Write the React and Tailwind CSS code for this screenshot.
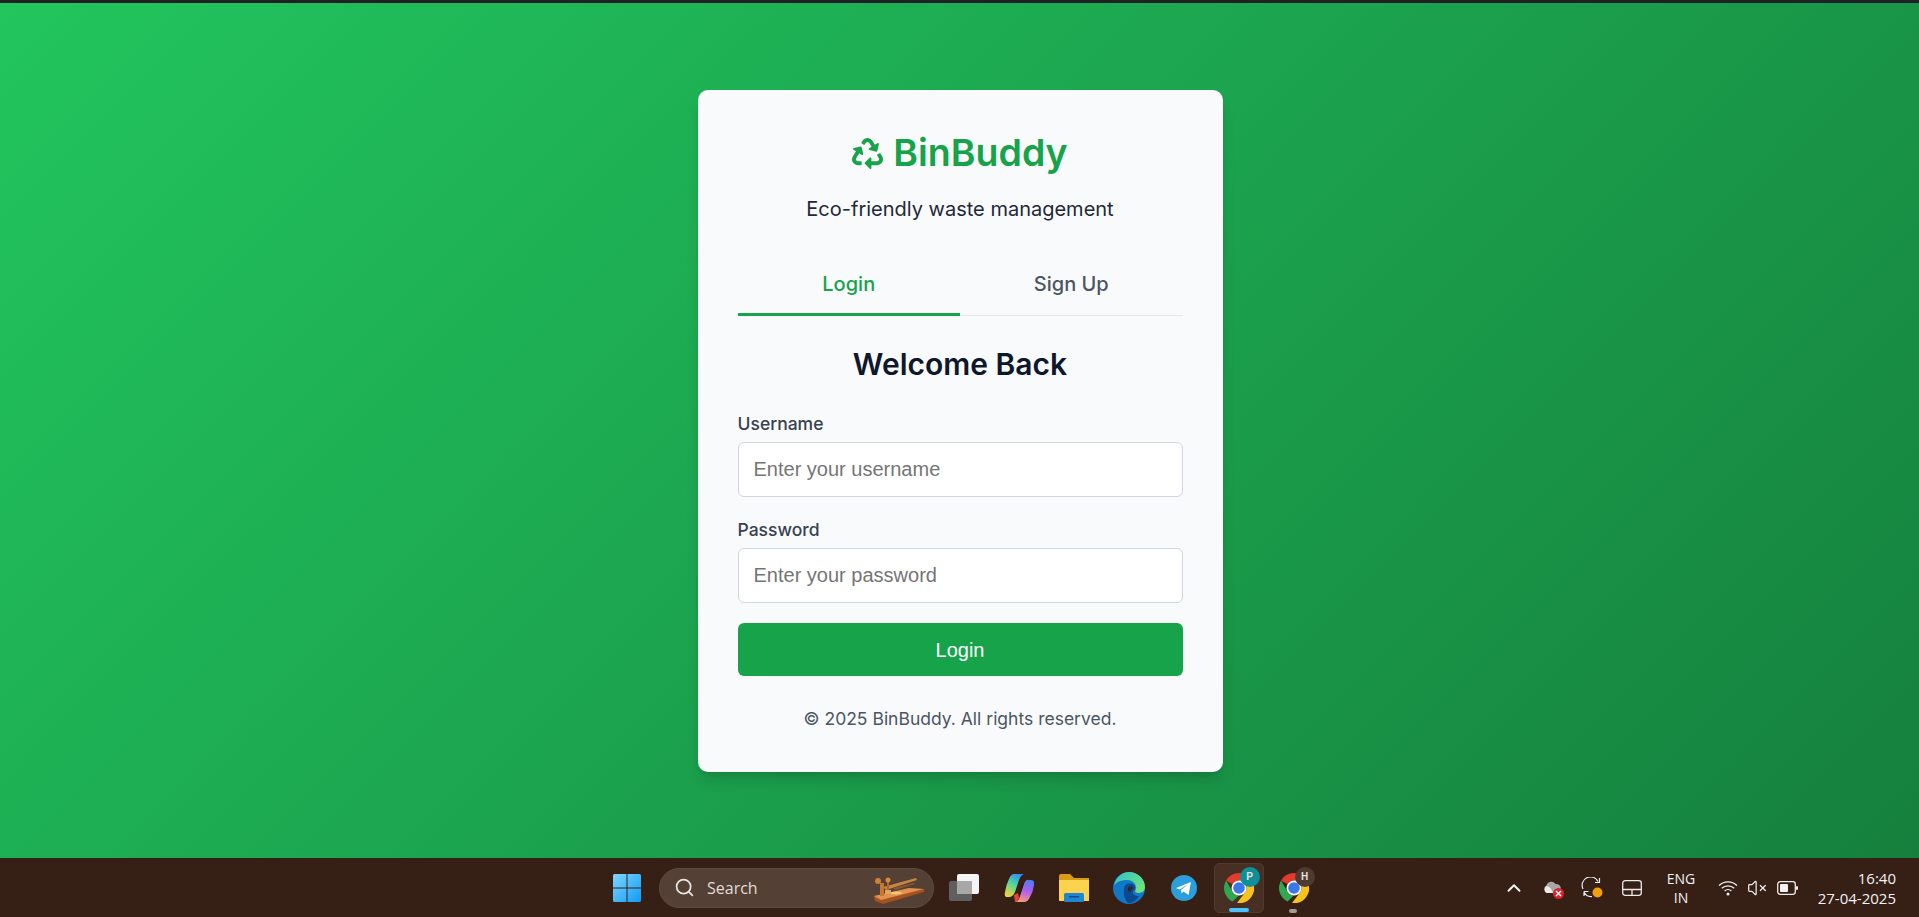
import { FaRecycle } from 'react-icons/fa';
import { ChevronUp, Search, VolumeX } from 'lucide-react';

const inter = "font-['Inter',sans-serif]";

const WindowsLogo = () => (
  <svg width="30" height="30" viewBox="0 0 30 30">
    <defs>
      <linearGradient id="win" x1="0" y1="0" x2="1" y2="1">
        <stop offset="0" stopColor="#7fd6ff" />
        <stop offset="1" stopColor="#0f9bf5" />
      </linearGradient>
    </defs>
    <path d="M1 2.5A1.5 1.5 0 0 1 2.500 1H14.500V14.500H1Z M15.500 1H27.500A1.500 1.500 0 0 1 29 2.500V14.500H15.500Z M1 15.500H14.500V29H2.500A1.500 1.500 0 0 1 1 27.500Z M15.500 15.500H29V27.500A1.500 1.500 0 0 1 27.500 29H15.500Z" fill="url(#win)" />
  </svg>
);

const TelegraphKey = () => (
  <svg width="60" height="38" viewBox="0 0 60 38">
    <path d="M3 27 L53 20 L53 23 L12 35 L4 32 Z" fill="#a4521f" />
    <path d="M3 27 L38 19 L53 20 L10 31 Z" fill="#e2924f" />
    <ellipse cx="25" cy="24" rx="6" ry="1.500" fill="#f2c77a" />
    <path d="M9 14 H13 V27 H9 Z" fill="#c9772f" />
    <circle cx="7" cy="12" r="3" fill="#d27f38" />
    <path d="M12 18 L45 9 L46 11 L15 21 Z" fill="#c88540" />
    <path d="M22 19 L43 14 L44 15 L24 21 Z" fill="#8a5a2c" />
    <rect x="16" y="12" width="2" height="9" fill="#b5652a" />
    <circle cx="17" cy="11" r="2.500" fill="#d38a45" />
    <rect x="14" y="21" width="6" height="4" fill="#e0a560" />
  </svg>
);

const TaskViewIcon = () => (
  <svg width="30" height="30" viewBox="0 0 30 30">
    <rect x="0" y="8" width="23" height="20" rx="2" fill="#5f5f5f" />
    <rect x="8" y="1" width="22" height="20" rx="2" fill="#f4f4f4" />
    <rect x="8" y="8" width="15" height="13" fill="#a8a8a8" />
  </svg>
);

const CopilotIcon = () => (
  <svg width="30" height="30" viewBox="0 0 30 30">
    <defs>
      <linearGradient id="cpa" x1="0.7" y1="0" x2="0.2" y2="1">
        <stop offset="0" stopColor="#2f8df4" />
        <stop offset="0.45" stopColor="#4fd6a0" />
        <stop offset="1" stopColor="#f6d23a" />
      </linearGradient>
      <linearGradient id="cpb" x1="0.6" y1="0" x2="0.4" y2="1">
        <stop offset="0" stopColor="#4f7bf0" />
        <stop offset="0.5" stopColor="#b25cf0" />
        <stop offset="1" stopColor="#f79a7a" />
      </linearGradient>
    </defs>
    <path d="M10 1 H20 Q17 2 15 7 L11 19 Q9 24 5 24 H3 Q0 24 1 19 Q2 12 5 6 Q7 1 10 1 Z" fill="url(#cpa)" />
    <path d="M20 29 H11 Q15 28 16 23 L20 11 Q22 6 25 7 H27 Q31 7 30 12 Q29 19 26 24 Q24 29 20 29 Z" fill="url(#cpb)" />
    <path d="M10 22 L14 20 L15 25 Q14 28 11 29 Z" fill="#e8453c" />
    <path d="M19 10 L15.500 21" stroke="#2d1710" strokeWidth="1.800" />
  </svg>
);

const ExplorerIcon = () => (
  <svg width="30" height="30" viewBox="0 0 30 30">
    <path d="M0 3 Q0 1 2 1 H11 L15 5 H30 V28 H0 Z" fill="#d99a16" />
    <path d="M0 7 H30 V27 Q30 28 29 28 H1 Q0 28 0 27 Z" fill="#fbd34f" />
    <rect x="5" y="20" width="20" height="9" rx="1.500" fill="#1f86d6" />
    <rect x="10" y="23" width="10" height="1.500" fill="#0b4f8a" />
  </svg>
);

const EdgeIcon = () => (
  <svg width="32" height="32" viewBox="0 0 32 32">
    <defs>
      <linearGradient id="edg" x1="0" y1="0" x2="1" y2="0.6">
        <stop offset="0" stopColor="#2bc3d2" />
        <stop offset="1" stopColor="#6fe07a" />
      </linearGradient>
    </defs>
    <circle cx="16" cy="16" r="16" fill="#1077c9" />
    <path d="M1 14 C3 5 9 0 16 0 C25 0 32 7 32 15 C32 21 26 22 22 20 C25 14 21 8 14 8 C8 8 3 10 1 14 Z" fill="url(#edg)" />
    <path d="M11 17 C11 12 17 10 21 13 C23 15 22 18 20 19 C19 22 22 24 26 24 C24 28 19 32 15 31 C12 28 10 22 11 17 Z" fill="#0c4a8e" />
    <path d="M15 17 C15 14 19 14 20 16 C18 17 17 19 18 20 C16 20 15 19 15 17 Z" fill="#3c2114" />
  </svg>
);

const TelegramIcon = () => (
  <svg width="26" height="26" viewBox="0 0 26 26">
    <circle cx="13" cy="13" r="13" fill="#2a9fdc" />
    <path d="M5 13 L20 7 L17.500 20 L12.500 16.500 L10.500 18.500 L10 15 L17 9.500 L8.500 14.500 Z" fill="#fff" />
  </svg>
);

const ChromeIcon = ({ letter, badge }) => (
  <div className="relative w-[30px] h-[30px]">
    <svg width="30" height="30" viewBox="0 0 30 30">
      <path d="M15 0 A15 15 0 0 1 28 7.500 H15 A7.500 7.500 0 0 0 8.500 11.250 L2 7.500 A15 15 0 0 1 15 0 Z" fill="#e33b2e" />
      <path d="M2 7.500 L8.500 18.750 A7.500 7.500 0 0 0 15 22.500 L8.500 28.500 A15 15 0 0 1 2 7.500 Z" fill="#2fa84f" />
      <path d="M28 7.500 A15 15 0 0 1 13 30 L21.500 18.750 A7.500 7.500 0 0 0 21.500 11.250 L15 7.500 Z" fill="#f7c21b" />
      <circle cx="15" cy="15" r="7.500" fill="#fff" />
      <circle cx="15" cy="15" r="5.800" fill="#3b78e7" />
    </svg>
    <span className={`absolute -top-[6px] -right-[6px] w-5 h-5 rounded-full flex items-center justify-center text-[10px] font-bold text-[#e6e0dc] font-['Liberation_Sans',sans-serif] ${badge}`}>
      {letter}
    </span>
  </div>
);

const CloudIcon = () => (
  <div className="relative w-5 h-5">
    <svg width="20" height="20" viewBox="0 0 20 20">
      <path d="M4 15 A4 4 0 0 1 3.500 7.500 A5 5 0 0 1 12.500 6 A4.500 4.500 0 0 1 14 15 Z" fill="#a9a6a4" />
      <path d="M4 15 A4 4 0 0 1 3.500 8 C6 8 9 11 10 15 Z" fill="#ecebea" />
    </svg>
    <span className="absolute right-[-1px] bottom-[-1px] w-[11px] h-[11px] rounded-full bg-[#d8232f] flex items-center justify-center">
      <svg width="7" height="7" viewBox="0 0 7 7">
        <path d="M1 1 L6 6 M6 1 L1 6" stroke="#fff" strokeWidth="1.400" />
      </svg>
    </span>
  </div>
);

const SyncIcon = () => (
  <svg width="22" height="22" viewBox="0 0 22 22">
    <path d="M2 12 A8 8 0 0 1 17 4.500" stroke="#ececec" strokeWidth="1.200" fill="none" />
    <path d="M18.500 1 V5.500 H14" stroke="#ececec" strokeWidth="1.200" fill="none" />
    <path d="M3 14.500 H7.500 M3 14.500 V19 M3 15 A8 8 0 0 0 11 19.500" stroke="#ececec" strokeWidth="1.200" fill="none" />
    <circle cx="16.500" cy="15.500" r="5" fill="#f59e0b" />
  </svg>
);

const TouchpadIcon = () => (
  <svg width="20" height="16" viewBox="0 0 20 16">
    <rect x="0.700" y="0.700" width="18.600" height="14.600" rx="2.500" stroke="#ececec" strokeWidth="1.300" fill="none" />
    <path d="M1 9.500 H19 M10 9.500 V15" stroke="#ececec" strokeWidth="1.300" />
  </svg>
);

const WifiIcon = () => (
  <svg width="20" height="16" viewBox="0 0 20 16">
    <path d="M1 5.500 A13 13 0 0 1 19 5.500 M3.800 8.300 A9 9 0 0 1 16.200 8.300 M6.600 11 A5 5 0 0 1 13.400 11" stroke="#f2f2f2" strokeWidth="1.300" fill="none" />
    <circle cx="10" cy="14" r="1.500" fill="#f2f2f2" />
  </svg>
);

const BatteryIcon = () => (
  <svg width="21" height="14" viewBox="0 0 21 14">
    <rect x="0.700" y="0.700" width="17.600" height="12.600" rx="2.500" stroke="#ececec" strokeWidth="1.300" fill="none" />
    <rect x="3" y="3" width="8" height="8" rx="1" fill="#f2f2f2" />
    <rect x="19" y="5" width="2" height="4" rx="1" fill="#ececec" />
  </svg>
);

const Field = ({ label, placeholder, type }) => (
  <div className="mb-5">
    <label className="block mb-[5px] text-[17.500px] leading-[26px] font-medium text-[#374151]">{label}</label>
    <input
      type={type}
      placeholder={placeholder}
      className="block w-full h-[55px] px-[15px] bg-white border border-[#d1d5db] rounded-[6px] text-[20px] font-['Liberation_Sans',sans-serif] placeholder:text-[#757575]"
    />
  </div>
);

const Taskbar = () => (
  <div className="flex items-center h-[59px] shrink-0 bg-[#361f15] pl-[599px] pr-[23px] text-white">
    <div className="flex items-center justify-center w-[55px]"><WindowsLogo /></div>
    <div className="flex items-center justify-between w-[275px] h-10 ml-[5px] pl-[14px] pr-[2px] rounded-full bg-[#544035] border border-[#5f4c41]">
      <div className="flex items-center gap-3">
        <Search size={21} strokeWidth={2} color="#e8e4e1" />
        <span className="text-base text-[#e2dcd8] font-['Open_Sans',sans-serif]">Search</span>
      </div>
      <TelegraphKey />
    </div>
    <div className="flex items-center ml-[2px]">
      <div className="flex items-center justify-center w-[55px]"><TaskViewIcon /></div>
      <div className="flex items-center justify-center w-[55px]"><CopilotIcon /></div>
      <div className="flex items-center justify-center w-[55px]"><ExplorerIcon /></div>
      <div className="flex items-center justify-center w-[55px]"><EdgeIcon /></div>
      <div className="flex items-center justify-center w-[55px]"><TelegramIcon /></div>
      <div className="relative flex items-center justify-center w-[50px] h-[50px] mx-[2.500px] rounded-[5px] bg-[#472f24] border border-[#503a2f]">
        <ChromeIcon letter="P" badge="bg-[#0e8f99]" />
        <span className="absolute bottom-0 left-[14px] w-5 h-1 rounded-full bg-[#4cc2ff]" />
      </div>
      <div className="relative flex items-center justify-center w-[55px] h-[50px]">
        <ChromeIcon letter="H" badge="bg-[#4f3a31]" />
        <span className="absolute bottom-0 left-[23px] w-2 h-1 rounded-full bg-[#a59b95]" />
      </div>
    </div>

    {/* Tray */}
    <div className="flex items-center ml-auto">
      <ChevronUp size={22} strokeWidth={2.200} color="#f2f2f2" />
      <div className="ml-[18px]"><CloudIcon /></div>
      <div className="ml-[18px]"><SyncIcon /></div>
      <div className="ml-[19px]"><TouchpadIcon /></div>
      <div className="w-[38px] ml-[20px] text-center text-sm leading-[19px] text-[#f2f2f2] font-['Open_Sans',sans-serif]">
        <div>ENG</div>
        <div>IN</div>
      </div>
      <div className="ml-[18px]"><WifiIcon /></div>
      <div className="ml-[9px]"><VolumeX size={20} strokeWidth={1.500} color="#ececec" /></div>
      <div className="ml-[10px]"><BatteryIcon /></div>
      <div className="w-[98px] text-right text-[15px] leading-[20px] text-[#f2f2f2] font-['Open_Sans',sans-serif]">
        <div>16:40</div>
        <div>27-04-2025</div>
      </div>
    </div>
  </div>
);

export default function App() {
  return (
    <div className={`flex flex-col h-screen overflow-hidden ${inter}`}>
      <div className="h-[3px] shrink-0 bg-[#202124]" />
      <div className="flex-1 flex items-center justify-center pt-[1px] pl-px bg-[linear-gradient(135deg,#22c55e,#15803d)]">
        <div className="w-[525px] p-10 bg-[#f8fafc] rounded-[10px] shadow-[0_10px_15px_-3px_rgba(0,0,0,0.15),0_4px_6px_-4px_rgba(0,0,0,0.1)]">
          <div className="flex items-center justify-center gap-[10px] text-[#16a34a]">
            <FaRecycle size={31} />
            <h1 className="text-[37.500px] leading-[46px] font-semibold">BinBuddy</h1>
          </div>
          <p className="mt-[18px] text-center text-[20px] leading-[30px] text-[#1f2937]">Eco-friendly waste management</p>

          {/* Tabs */}
          <div className="flex mt-[30px] border-b border-[#e5e7eb]">
            <button className="flex-1 h-[62px] -mb-px text-[20px] font-medium text-[#16a34a] border-b-[3px] border-[#16a34a]">Login</button>
            <button className="flex-1 h-[62px] -mb-px pb-[3px] text-[20px] font-medium text-[#4b5563]">Sign Up</button>
          </div>

          <h2 className="mt-[29px] mb-[28px] text-center text-[30px] leading-[38px] font-semibold text-[#0f172a]">Welcome Back</h2>

          <Field label="Username" placeholder="Enter your username" type="text" />
          <Field label="Password" placeholder="Enter your password" type="password" />

          <button className="block w-full h-[53px] rounded-[6px] bg-[#16a34a] text-white text-[20px] font-['Liberation_Sans',sans-serif]">
            Login
          </button>

          <p className="mt-[30px] text-center text-[17.500px] leading-[26px] text-[#4b5563]">© 2025 BinBuddy. All rights reserved.</p>
        </div>
      </div>
      <Taskbar />
    </div>
  );
}
